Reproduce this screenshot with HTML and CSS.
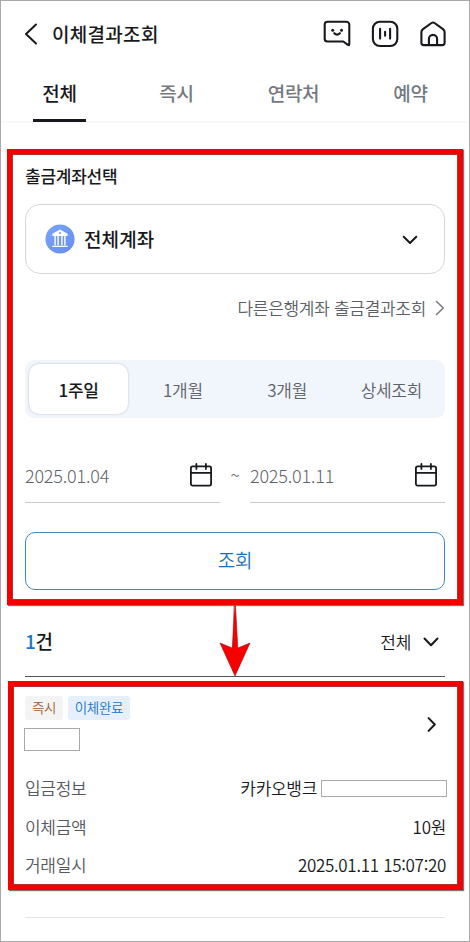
FILE: index.html
```html
<!DOCTYPE html>
<html lang="ko">
<head>
  <meta charset="UTF-8">
  <meta name="viewport" content="width=device-width, initial-scale=1.0">
  <title>이체결과조회</title>
  <link rel="stylesheet" href="styles.css">
</head>
<body>
  <header class="header">
    <svg class="back" width="14" height="22" viewBox="0 0 14 22"><path d="M12 1.5L2 11l10 9.500"/></svg>
    <h1>이체결과조회</h1>
    <div class="header-icons">
      <!-- 챗봇 -->
      <svg width="28" height="28" viewBox="0 0 28 28">
        <path d="M4.500 1.800h19a2.800 2.800 0 0 1 2.800 2.800v19.500q0 1.600-1.400.8l-4.600-3.400H4.500a2.800 2.800 0 0 1-2.800-2.800V4.600a2.800 2.800 0 0 1 2.800-2.800z"/>
        <path d="M11.300 13.200q2.800 2.800 5.600 0"/>
        <circle class="dot" cx="9.700" cy="10.200" r="1.500"/><circle class="dot" cx="18.500" cy="10.200" r="1.500"/>
      </svg>
      <!-- 음성 -->
      <svg width="28" height="28" viewBox="0 0 28 28">
        <rect x="1.900" y="1.700" width="24.400" height="24.300" rx="7"/>
        <path d="M9.100 8.800v9.800M14.100 11.700v4M19.100 8.800v9.800"/>
      </svg>
      <!-- 홈 -->
      <svg width="28" height="28" viewBox="0 0 28 28">
        <path d="M12.500 3L4 9.200q-1.600 1.200-1.600 3v10.600q0 2.300 2.300 2.300h18.600q2.300 0 2.300-2.300V12.200q0-1.800-1.600-3L15.500 3q-1.500-1.100-3 0z"/>
        <path d="M9.900 25v-6a4.100 4.100 0 0 1 8.200 0v6"/>
      </svg>
    </div>
  </header>

  <nav class="tabs">
    <a class="tab active">전체</a>
    <a class="tab">즉시</a>
    <a class="tab">연락처</a>
    <a class="tab">예약</a>
  </nav>

  <section class="search red-box">
    <h2>출금계좌선택</h2>
    <div class="account-select">
      <svg class="bank" width="30" height="30" viewBox="0 0 30 30">
        <defs><linearGradient id="blue" x1="0" y1="0" x2="1" y2="1"><stop offset="0" stop-color="#78a6ff"/><stop offset="1" stop-color="#668bea"/></linearGradient></defs>
        <circle cx="15" cy="15" r="14.600" fill="url(#blue)"/>
        <path fill="#fff" fill-rule="evenodd" d="M15 5.600l7.600 4.200v2.200H7.400V9.800zM15 7.700l1.300 1.300-1.300 1.300-1.300-1.300z"/>
        <path class="columns" d="M10.100 12v9.300M13.100 12v9.300M16.900 12v9.300M19.900 12v9.300M7.300 22.400h15.400"/>
      </svg>
      <span>전체계좌</span>
      <svg class="chevron" width="16" height="10" viewBox="0 0 16 10"><path d="M1.700 1.700L8 8l6.300-6.300"/></svg>
    </div>
    <a class="other-bank">
      <span>다른은행계좌 출금결과조회</span>
      <svg width="10" height="16" viewBox="0 0 10 16"><path d="M1.500 1.500L8.300 8l-6.800 6.500"/></svg>
    </a>
    <div class="period">
      <button class="active">1주일</button>
      <button>1개월</button>
      <button>3개월</button>
      <button>상세조회</button>
    </div>
    <div class="dates">
      <div class="date">
        <span>2025.01.04</span>
        <svg width="24" height="24" viewBox="0 0 24 24"><rect x="1.900" y="3.400" width="20.200" height="19.200" rx="1.800"/><path d="M2 9.900h20M7.400.9v5M16.900.9v5"/></svg>
      </div>
      <span class="tilde">~</span>
      <div class="date">
        <span>2025.01.11</span>
        <svg width="24" height="24" viewBox="0 0 24 24"><rect x="1.900" y="3.400" width="20.200" height="19.200" rx="1.800"/><path d="M2 9.900h20M7.400.9v5M16.900.9v5"/></svg>
      </div>
    </div>
    <button class="submit">조회</button>
  </section>

  <div class="summary">
    <p class="count"><b>1</b>건</p>
    <div class="filter">
      <span>전체</span>
      <svg class="chevron" width="16" height="10" viewBox="0 0 16 10"><path d="M1.500 1.500L8 8.300l6.500-6.800"/></svg>
    </div>
    <svg class="arrow" width="34" height="72" viewBox="0 0 34 72"><path d="M16.500 1h1l2.300 42L32 38 17 71 2 38l12.200 5z"/></svg>
  </div>

  <section class="result red-box">
    <div class="result-top">
      <div>
        <div class="chips">
          <span class="chip">즉시</span>
          <span class="chip done">이체완료</span>
        </div>
        <div class="mask mask-name"></div>
      </div>
      <svg class="chevron" width="10" height="16" viewBox="0 0 10 16"><path d="M1.600 2.100L7.800 8.500l-6.200 6.400"/></svg>
    </div>
    <dl>
      <div class="row"><dt>입금정보</dt><dd>카카오뱅크<span class="mask mask-account"></span></dd></div>
      <div class="row"><dt>이체금액</dt><dd>10원</dd></div>
      <div class="row"><dt>거래일시</dt><dd>2025.01.11 15:07:20</dd></div>
    </dl>
  </section>
  <hr>
</body>
</html>
```

FILE: styles.css
```css
* {
  box-sizing: border-box;
}
body {
  margin: 0;
  width: 470px;
  height: 942px;
  border: 1px solid #aaa;
  background: #fff;
  color: #17191c;
  font-family: "Noto Sans CJK KR", sans-serif;
  font-size: 17px;
  font-weight: 350;
  line-height: 24px;
  letter-spacing: -0.3px;
  overflow: hidden;
}
h1, h2, p, dl, dd {
  margin: 0;
}
svg {
  display: block;
  flex: none;
  fill: none;
  stroke: #17191c;
  stroke-width: 2;
  stroke-linecap: round;
  stroke-linejoin: round;
}
button {
  padding: 0;
  border: 0;
  background: none;
  font: inherit;
  letter-spacing: inherit;
  color: #5d6269;
}

.header {
  display: flex;
  align-items: center;
  height: 66px;
  padding: 0 22px 0 23px;
}
.header h1 {
  margin-left: 14px;
  font-size: 19px;
  font-weight: 500;
  letter-spacing: 0.3px;
}
.header-icons {
  display: flex;
  gap: 20px;
  margin-left: auto;
}
.header-icons svg {
  stroke-width: 2.1;
}
.header-icons .dot {
  fill: #17191c;
  stroke: none;
}

.tabs {
  display: flex;
  justify-content: space-between;
  height: 56px;
  padding: 0 32px;
  border-bottom: 2px solid #f8f9fb;
}
.tab {
  width: 53px;
  height: 55px;
  padding-top: 14px;
  color: #747981;
  font-size: 19px;
  font-weight: 500;
  text-align: center;
  white-space: nowrap;
}
.tab.active {
  color: #17191c;
  border-bottom: 3px solid #17191c;
}

.red-box {
  border: 5px solid #f40000;
  outline: 1px solid #a33;
  outline-offset: -6px;
  box-shadow: 1px 1px 1px #777;
}
.search {
  height: 456px;
  margin: 26px 6px 0;
  padding: 10px 13px 0;
}
.search h2 {
  font-size: 17px;
  font-weight: 500;
  letter-spacing: -0.25px;
}
.account-select {
  display: flex;
  align-items: center;
  height: 70px;
  margin-top: 16px;
  padding: 0 26px 0 19px;
  border: 1px solid #d2d8dc;
  border-radius: 15px;
  font-size: 19px;
  font-weight: 500;
  letter-spacing: 0.1px;
}
.account-select span {
  margin-left: 9px;
}
.account-select .chevron {
  margin: 2px 0 0 auto;
}
.bank {
  stroke: none;
}
.bank .columns {
  stroke: #fff;
  stroke-width: 1.4;
  stroke-linecap: butt;
}
.other-bank {
  display: flex;
  align-items: center;
  justify-content: flex-end;
  gap: 9px;
  margin-top: 22px;
  color: #5c6066;
}
.other-bank svg {
  stroke: #777b80;
  stroke-width: 1.6;
}
.period {
  display: grid;
  grid-template-columns: repeat(4, 1fr);
  gap: 5px;
  height: 58px;
  margin-top: 40px;
  padding: 4px;
  border-radius: 9px;
  background: #f1f5fc;
}
.period button {
  padding-top: 2px;
}
.period .active {
  border-radius: 10px;
  background: #fff;
  box-shadow: 0 0 2px #aeb4bd;
  color: #17191c;
  font-weight: 500;
}
.dates {
  display: flex;
  justify-content: space-between;
  margin-top: 30px;
}
.date {
  display: flex;
  align-items: center;
  justify-content: space-between;
  width: 195px;
  height: 55px;
  padding-right: 7px;
  border-bottom: 1px solid #c7cbce;
  color: #606368;
  font-size: 18px;
  font-weight: 300;
  letter-spacing: -0.2px;
}
.date svg {
  stroke-width: 1.8;
}
.tilde {
  line-height: 54px;
  color: #6b6e72;
}
.submit {
  display: block;
  width: 100%;
  height: 58px;
  margin-top: 29px;
  padding-bottom: 2px;
  border: 1px solid #3e88c7;
  border-radius: 10px;
  color: #1671bd;
  font-size: 19px;
}

.summary {
  position: relative;
  display: flex;
  align-items: center;
  justify-content: space-between;
  height: 72px;
  margin: 0 24px;
  padding-right: 6px;
  border-bottom: 1px solid #4e5458;
}
.count {
  font-size: 19px;
  font-weight: 500;
}
.count b {
  color: #1478d2;
  font-weight: 500;
}
.filter {
  display: flex;
  align-items: center;
  gap: 12px;
  padding-top: 3px;
}
.arrow {
  position: absolute;
  top: 0;
  left: 193px;
  fill: #f80000;
  stroke: #981010;
  stroke-width: 0.6;
}

.result {
  height: 209px;
  margin: 4px 6px 0 7px;
  padding: 10px 12px 0;
}
.result-top {
  display: flex;
  align-items: center;
  justify-content: space-between;
  padding-right: 9px;
}
.chips {
  display: flex;
  gap: 5px;
}
.chip {
  width: 38px;
  height: 24px;
  border-radius: 3px;
  background: #f4f4f4;
  color: #a65c35;
  font-size: 13.500px;
  line-height: 23px;
  text-align: center;
}
.chip.done {
  width: 62px;
  background: #e6effc;
  color: #1976ca;
}
.mask {
  display: block;
  border: 1px solid #aaa;
  background: #fff;
}
.mask-name {
  width: 56px;
  height: 23px;
  margin: 8px 0 0 -1px;
}
dl {
  margin-top: 18px;
}
.row {
  display: flex;
  align-items: center;
  justify-content: space-between;
  height: 38.500px;
}
.row dt {
  color: #55595f;
}
.row dd {
  display: flex;
  align-items: center;
}
.mask-account {
  width: 126px;
  height: 17px;
  margin: 0 -1px 0 4px;
}
hr {
  margin: 27px 24px 0;
  border: 0;
  border-top: 1px solid #e2e5ec;
}
```
